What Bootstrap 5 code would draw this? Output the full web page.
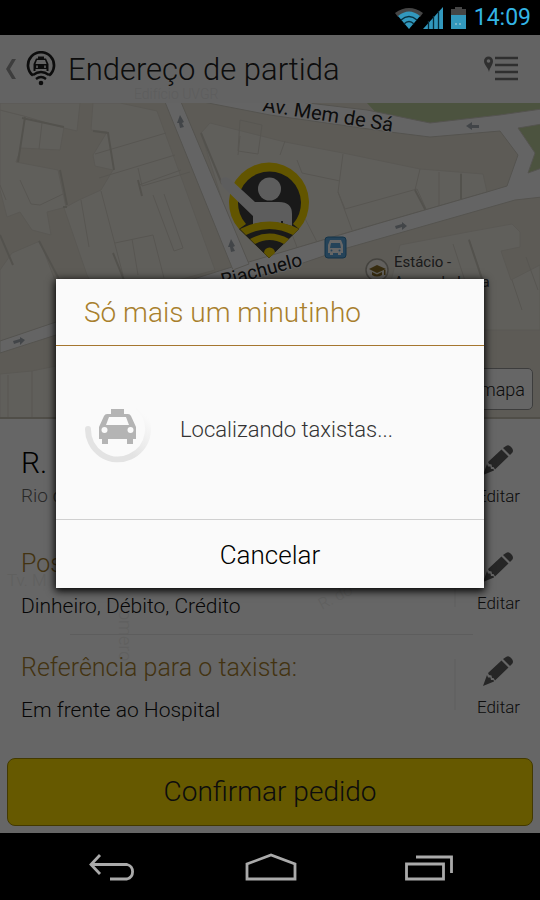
<!DOCTYPE html>
<html lang="pt-BR">
<head>
<meta charset="utf-8">
<meta name="viewport" content="width=device-width, initial-scale=1">
<title>Endereço de partida</title>
<link rel="stylesheet" href="https://cdn.jsdelivr.net/npm/bootstrap@5.3.0/dist/css/bootstrap.min.css">
<style>
body{font-family:Roboto,"Liberation Sans",sans-serif;font-weight:300;color:#222;background:#000}
svg{display:block;flex:none}
.statusbar{height:35px;padding-right:9px;color:#33b5e5;font-size:23px;font-weight:400;line-height:37px}
.screen{background:#fff}
.topbar{height:68px;background:#f8f8f8;padding:0 22px 0 6px}
.topbar h1{font-size:31px;font-weight:300;line-height:40px;padding-top:2px;margin-left:8px}
.ghost{position:absolute;inset:0;width:100%;height:100%}
.mapview{min-height:312px;border-bottom:2px solid #c8c2b4;background:#e8e3d6}
.mapbtn{margin:0 7px 7px 0;height:42px;padding:0 7px;font-size:18px;font-weight:300;color:#222;background:#fff;border:1px solid #999;border-radius:5px}
.panel{padding-top:4px}
.entry{min-height:104px;padding:22px 20px 0 21px}
.entry-address{min-height:107px}
.entry h2{font-size:25px;font-weight:300;line-height:24px;color:#a87f2d;margin-bottom:16px}
.entry p{font-size:21px;line-height:28px;margin:0;color:#111}
.entry .street{font-size:30px;line-height:36px;color:#000}
.entry .city{font-size:19px;line-height:30px;color:#666}
.edit{font-size:17px;line-height:22px;font-weight:300;color:#222}
.edit svg{margin-bottom:10px}
.confirm{margin:20px 7px 7px;height:68px;font-size:28px;font-weight:300;background:#ffdf00;border:1px solid #a89000;border-radius:8px;color:#222}
.scrim{position:absolute;inset:0;background:rgba(0,0,0,.6);padding:0 56px 2px}
.dialog{background:#fafafa;box-shadow:0 2px 8px 1px #000;color:#333}
.dialog h2{font-size:28px;font-weight:300;line-height:64px;padding:2px 0 0 28px;color:#a87f2d;border-bottom:1px solid #a5762f}
.waiting{height:173px;padding:0 28px 6px;font-size:22px}
.cancel{height:69px;padding-top:4px;font-size:26px;font-weight:300;color:#000;background:transparent;border:0;border-top:1px solid #d0d0d0}
.softkeys{height:67px;padding:0 87px 0 88px}
</style>
<script src="https://cdn.jsdelivr.net/npm/bootstrap@5.3.0/dist/js/bootstrap.bundle.min.js"></script>
</head>
<body>
<div class="d-flex flex-column min-vh-100">
  <div class="statusbar d-flex align-items-center justify-content-end">
    <svg width="28" height="22" viewBox="0 0 28 22" aria-hidden="true"><path d="M0 6Q14-4 28 6L25 10Q14 1 3 10Z" fill="#454545"/><path d="M3 9Q14 0 25 9L14 22Z" fill="#3298bd"/><path d="M6 13Q14 6 22 13M9 17Q14 12 19 17" fill="none" stroke="#07303f" stroke-width="1.5"/></svg>
    <svg class="me-2" width="20" height="22" viewBox="0 0 20 22" aria-hidden="true"><path d="M0 22L20 0V22Z" fill="#3298bd"/><path d="M5.500 14V22M10.500 9V22M15.500 4V22" stroke="#062b3a" stroke-width="1.300"/></svg>
    <svg width="15" height="22" viewBox="0 0 15 22" aria-hidden="true"><path d="M0 2H4V0H11V2H15V8H0Z" fill="#454545"/><path d="M0 8H15V22H0Z" fill="#3298bd"/><path d="M5 16V18M9 16V18" stroke="#8ac0d0" stroke-width="1.500"/></svg>
    <span class="ms-2">14:09</span>
  </div>

  <div class="screen position-relative flex-grow-1 d-flex flex-column">
    <header class="topbar d-flex align-items-center position-relative">
      <svg class="ghost" viewBox="0 35 540 68" preserveAspectRatio="xMinYMin slice" aria-hidden="true"><text x="134" y="99" font-size="14" fill="#e9e9e9">Edifício UVGR</text></svg>
      <svg width="10" height="20" viewBox="0 0 10 20" aria-hidden="true"><path d="M6 0H10L4 10L10 20H6L0 10Z" fill="#9a9a9a"/></svg>
      <svg class="ms-2" width="36" height="36" viewBox="-2 0 36 36" aria-hidden="true"><path d="M7 24.500A13 13 0 1 1 23 24.500" fill="none" stroke="#202020" stroke-width="2.700"/><path d="M12 5.500H18V7.500H20L22.500 13V20H20.500V18H9.500V20H7.500V13L10 7.500H12ZM11 9L9.500 13H20.500L19 9Z" fill="#202020" fill-rule="evenodd"/><path d="M11 14.500V17M19 14.500V17" stroke="#f8f8f8" stroke-width="1.500"/><path d="M7 24Q15 18 23 24M10 28Q15 24 20 28" fill="none" stroke="#202020" stroke-width="2.300"/><circle cx="15" cy="32" r="2.300" fill="#202020"/></svg>
      <h1 class="mb-0 position-relative">Endereço de partida</h1>
      <button class="btn p-0 border-0 ms-auto" aria-label="Lista de endereços"><svg width="34" height="26" viewBox="0 0 34 26" aria-hidden="true"><path d="M5 16C4 11 0 9 0 5A4.500 4.500 0 0 1 9 5C9 9 6 11 5 16ZM4.500 3.200A1.800 1.800 0 1 0 4.500 6.800A1.800 1.800 0 1 0 4.500 3.200Z" fill="#777" fill-rule="evenodd"/><path d="M11 2H34M11 9H34M11 16H34M11 23H34" stroke="#777" stroke-width="2.600"/></svg></button>
    </header>

    <div class="mapview position-relative flex-grow-1 d-flex align-items-end justify-content-end">
      <svg class="ghost" viewBox="0 103 540 314" preserveAspectRatio="xMidYMin slice" role="img" aria-label="Mapa do local de partida">
        <g fill="#f0ede4" stroke="#e0dcd1" stroke-width="1">
          <path d="M0 110L24 116L64 127L60 150L21 148L16 162L58 170L66 207L47 212L51 235L32 230L20 212L7 217L0 190Z"/>
          <path d="M0 103H80L77 131L64 128L24 116L0 110Z"/>
          <path d="M93 103H120L157 111L215 270L160 285L100 300L87 275L64 208L79 200L101 190L113 170L95 166L93 155L107 132L91 130Z"/>
          <path d="M12 253L40 241L56 283V324L0 341V270Z"/>
          <path d="M201 133L210 123L285 142L343 153L420 169L483 174L487 192L352 231L247 263L222 200Z"/>
          <path d="M390 285L400 245L468 232L512 224L520 232V247L501 251L511 280L540 265V330H390Z"/>
          <path d="M0 374L32 371L56 366V418H0Z"/>
        </g>
        <path d="M95 154L166 133M99 178L175 155M139 185L181 170M81 200L89 247M101 191L123 275M138 168L142 186L190 172M153 195L174 251L183 248L164 194M115 243L153 235L164 278M132 239L138 275M20 180L31 204L40 205L63 194M42 123L39 149M0 185L6 200M240 136L238 155M262 125L240 120L238 151L258 154ZM285 141L280 155M343 154L338 192L352 230M338 192L345 209L417 189L427 211M420 169L415 190M439 172V206M461 173V201M297 160L302 173L340 181M299 207L317 242M283 211L300 255M453 244L468 290M469 239L483 280M32 371V418M8 375V418M512 280L522 310M526 257L538 290" fill="none" stroke="#dad6cb" stroke-width="1"/>
        <path d="M22 118L64 127M25 117L18 162M93 131L108 133L114 170M63 207L67 207M60 170L67 205M201 133L222 184M138 180L142 196M415 190L426 211M461 174V200M469 240L482 279M0 235L13 265M39 241L60 281M113 253L124 280" fill="none" stroke="#d0ccc1" stroke-width="2"/>
        <path d="M367 103H540V111L500 115L430 123L380 117ZM518 128L540 124V169L528 173L535 153Z" fill="#bdcf9d"/>
        <g fill="#fbfbfb" stroke="#d2cfc5" stroke-width="1">
          <path d="M0 341L56 322L232 267L380 223L487 192L507 186L518 155L500 131L430 137L390 132L270 115L203 102H300L367 110L430 123L500 115L542 109V124L518 128L535 153L528 173L542 168V197L515 200L347 248L303 263L56 335L0 353Z"/>
          <path d="M165 102H181L249 264L233 270Z"/>
        </g>
        <g fill="#a5adb5"><path d="M180 115L184 122L182 123L184 127L180 128L179 123H177Z"/><path d="M231 239L235 246L233 247L235 251L231 252L230 247H228Z"/><path d="M466 126L472 122V125H479V128H472V130Z"/><path d="M395 226L402 224V222L407 226L402 230V227L396 229Z"/><path d="M13 341L20 339V337L25 340L20 345V342L14 344Z"/></g>
        <g font-family="Roboto, sans-serif" fill="#222" font-weight="400" stroke="#fbfbfb" stroke-width="2" paint-order="stroke">
          <text transform="translate(262 111) rotate(9)" font-size="20">Av. Mem de Sá</text>
          <text transform="translate(223 287) rotate(-15)" font-size="19">Riachuelo</text>
          <g font-size="15" fill="#444" stroke="#f0ede4"><text x="394" y="267">Estácio -</text><text x="394" y="287">Arcos da Lapa</text></g>
        </g>
        <rect x="325" y="237" width="21" height="21" rx="3" fill="#5ca9df" stroke="#347fb3"/><path d="M330 240H341L343 245V253H341V255H338V253H333V255H330V253H328V245ZM331 243H340L341 248H330Z" fill="#fff" fill-rule="evenodd"/><circle cx="331.500" cy="250.500" r="1" fill="#5ca9df"/><circle cx="339.500" cy="250.500" r="1" fill="#5ca9df"/>
        <circle cx="377" cy="270" r="11" fill="#f4f1e8" stroke="#aaa69c" stroke-width="1.500"/><path d="M369 269L377 265L386 269L377 273ZM372 272L377 274.500L382 272V275Q377 278 372 275ZM384 270H385.500V275H384Z" fill="#8b6f28"/>
        <path d="M239 229A40 40 0 1 1 299 229L269 258Z" fill="#f5d400"/>
        <path d="M246 224A31.500 31.500 0 1 1 293 224L299 229L269 258L239 229Z" fill="#404040"/>
        <circle cx="269.500" cy="189" r="11.500" fill="#e9e9e9"/>
        <path d="M222 185Q218 178 226 177L230 179L255 202H279Q292 202 292 214V228H283V221H281V228H253V216L223 187Z" fill="#e9e9e9"/>
        <path d="M240 229Q269 215 299 229L269 258Z" fill="#404040"/>
        <path d="M240 229Q269.500 214 299 229L293 235Q269.500 223 246 235Z" fill="#f5d400"/>
        <path d="M250 239Q269.500 228 289 239L284 244Q269.500 236 255 244Z" fill="#f5d400"/>
        <path d="M269 258L264 253A5.500 5.500 0 1 1 275 253Z" fill="#f5d400"/>
      </svg>
      <button class="mapbtn position-relative">Ver no mapa</button>
    </div>

    <main class="panel position-relative">
      <svg class="ghost" viewBox="0 419 540 319" preserveAspectRatio="xMidYMin slice" aria-hidden="true"><g fill="#efefed"><text x="7" y="586" font-size="17">Tv. M</text><text transform="translate(119 610) rotate(90)" font-size="18">omero</text><text transform="translate(322 610) rotate(-28)" font-size="16">R. do</text></g><path d="M70 634.500H473M455 659V710M455 553V607" stroke="#e9e9e9"/></svg>
      <section class="entry entry-address d-flex justify-content-between position-relative">
        <div><p class="street">R. Riachuelo</p><p class="city">Rio de Janeiro</p></div>
        <button class="edit btn p-0 border-0 d-flex flex-column align-items-center align-self-start"><svg width="30" height="30" viewBox="0 0 30 30" fill="#606060" aria-hidden="true"><path d="M20 3L23 1Q26-1 29 3Q31 6 29 8L27 10Z"/><path d="M18.500 4.500L25.500 11.500L12 24.500L10.500 22L9 22L8.500 19.500L6 19L5 17Z"/><path d="M4 19L5 21.500L7.500 21.500L8 24H10.500L11 25.500L0 30Z"/></svg>Editar</button>
      </section>
      <section class="entry d-flex justify-content-between position-relative">
        <div><h2>Posso pagar com:</h2><p>Dinheiro, Débito, Crédito</p></div>
        <button class="edit btn p-0 border-0 d-flex flex-column align-items-center align-self-start"><svg width="30" height="30" viewBox="0 0 30 30" fill="#606060" aria-hidden="true"><path d="M20 3L23 1Q26-1 29 3Q31 6 29 8L27 10Z"/><path d="M18.500 4.500L25.500 11.500L12 24.500L10.500 22L9 22L8.500 19.500L6 19L5 17Z"/><path d="M4 19L5 21.500L7.500 21.500L8 24H10.500L11 25.500L0 30Z"/></svg>Editar</button>
      </section>
      <section class="entry d-flex justify-content-between position-relative">
        <div><h2>Referência para o taxista:</h2><p>Em frente ao Hospital</p></div>
        <button class="edit btn p-0 border-0 d-flex flex-column align-items-center align-self-start"><svg width="30" height="30" viewBox="0 0 30 30" fill="#606060" aria-hidden="true"><path d="M20 3L23 1Q26-1 29 3Q31 6 29 8L27 10Z"/><path d="M18.500 4.500L25.500 11.500L12 24.500L10.500 22L9 22L8.500 19.500L6 19L5 17Z"/><path d="M4 19L5 21.500L7.500 21.500L8 24H10.500L11 25.500L0 30Z"/></svg>Editar</button>
      </section>
    </main>
    <button class="confirm">Confirmar pedido</button>

    <div class="scrim d-flex align-items-center">
      <div class="dialog w-100 d-flex flex-column" role="dialog" aria-modal="true" aria-labelledby="dialogTitle">
        <h2 class="mb-0" id="dialogTitle">Só mais um minutinho</h2>
        <div class="waiting d-flex align-items-center" role="status">
          <svg class="me-4" width="68" height="68" viewBox="0 0 68 68" aria-hidden="true"><defs><linearGradient id="fade" x1="0" y1="1" x2="1" y2="0"><stop offset=".4" stop-color="#e3e3e3"/><stop offset=".9" stop-color="#fafafa"/></linearGradient></defs><path d="M4 34A30 30 0 1 0 54 12" fill="none" stroke="url(#fade)" stroke-width="6" stroke-linecap="round"/><path d="M27 14H40V19H44Q46 19 47 21L52 32V44H49V49H43V44H24V49H18V44H15V32L20 21Q21 19 23 19H27ZM25 22L22 30H45L42 22Z" fill="#b4b4b4" fill-rule="evenodd"/><circle cx="20.500" cy="35" r="3" fill="#fafafa"/><circle cx="46.500" cy="35" r="3" fill="#fafafa"/></svg>
          <span class="ms-1">Localizando taxistas...</span>
        </div>
        <button class="cancel">Cancelar</button>
      </div>
    </div>
  </div>

  <nav class="softkeys d-flex align-items-center justify-content-between" aria-label="Navegação do sistema">
    <button class="btn p-0 border-0" aria-label="Voltar"><svg width="48" height="28" viewBox="0 0 48 28" fill="none" stroke="#aaa" stroke-width="2.800" aria-hidden="true"><path d="M12 2L3 11.500L12 21M3 11.500H39A7.500 7.500 0 0 1 39 26H22"/></svg></button>
    <button class="btn p-0 border-0" aria-label="Início"><svg width="52" height="28" viewBox="0 0 52 28" fill="none" stroke="#aaa" stroke-width="2.800" aria-hidden="true"><path d="M2 26V11L26 2L50 11V26Z"/></svg></button>
    <button class="btn p-0 border-0" aria-label="Recentes"><svg width="48" height="28" viewBox="0 0 48 28" fill="none" stroke="#aaa" stroke-width="2.800" aria-hidden="true"><path d="M1.500 11H38.500V26H1.500ZM11 4H46.500V20"/></svg></button>
  </nav>
</div>
</body>
</html>
